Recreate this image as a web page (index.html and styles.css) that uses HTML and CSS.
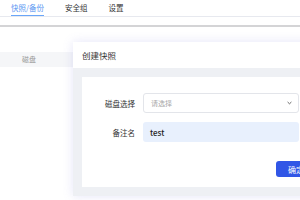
FILE: index.html
```html
<!DOCTYPE html>
<html lang="zh-CN">
<head>
    <meta charset="UTF-8">
    <title>创建快照</title>
    <link rel="stylesheet" href="styles.css">
</head>
<body>
    <div class="tabs">
        <div class="tab active">快照/备份</div>
        <div class="tab">安全组</div>
        <div class="tab">设置</div>
    </div>
    <div class="divider"></div>

    <div class="table-head">
        <span class="col">磁盘</span>
    </div>

    <div class="modal">
        <div class="modal-header">创建快照</div>
        <div class="modal-body">
            <div class="card">
                <div class="form-row">
                    <label class="form-label">磁盘选择</label>
                    <div class="select">
                        <span class="placeholder">请选择</span>
                        <svg class="chevron" width="5" height="4" viewBox="0 0 5 4">
                            <path d="M0.6 1 L2.5 2.8 L4.4 1" fill="none" stroke="#555" stroke-width="0.9"/>
                        </svg>
                    </div>
                </div>
                <div class="form-row">
                    <label class="form-label">备注名</label>
                    <div class="input">test</div>
                </div>
                <div class="actions">
                    <button class="button">确定</button>
                </div>
            </div>
        </div>
    </div>
</body>
</html>
```

FILE: styles.css
```css
html, body {
    margin: 0;
    padding: 0;
}
body {
    width: 300px;
    height: 200px;
    overflow: hidden;
    position: relative;
    background: #fff;
    font-family: "Noto Sans CJK SC", "Noto Sans", sans-serif;
    color: #333;
}
.tabs {
    display: flex;
    height: 17px;
    border-bottom: 1px solid #e7e9ef;
    box-sizing: border-box;
    padding-left: 11px;
    gap: 21px;
}
.tab {
    font-size: 7.5px;
    line-height: 15px;
    height: 16px;
    box-sizing: border-box;
    color: #333;
}
.tab.active {
    color: #5b97f2;
    border-bottom: 1.5px solid #6aa6f8;
}
.divider {
    margin-top: 8px;
    height: 2px;
    background: #d4d4d6;
}
.table-head {
    margin-top: 25px;
    height: 15px;
    background: #f5f6f8;
    font-size: 7px;
    line-height: 15px;
    color: #999;
    padding-left: 22px;
}
.modal {
    position: absolute;
    left: 73px;
    top: 42px;
    width: 270px;
    height: 154px;
    background: #fff;
    box-shadow: 0 0 10px rgba(110, 110, 220, 0.18);
    display: flex;
    flex-direction: column;
}
.modal-header {
    height: 26px;
    line-height: 27px;
    padding-left: 9px;
    font-size: 8.5px;
    color: #333;
}
.modal-body {
    flex: 1;
    background: #eef0f4;
    padding: 9px 0 9px 9px;
}
.card {
    background: #fff;
    height: 110px;
    box-sizing: border-box;
    padding-top: 16px;
}
.form-row {
    display: flex;
    align-items: center;
    gap: 8px;
    margin-bottom: 9px;
}
.form-label {
    width: 53px;
    text-align: right;
    font-size: 7.5px;
    color: #333;
}
.select, .input {
    width: 156px;
    height: 20px;
    box-sizing: border-box;
    border-radius: 3px;
    padding-left: 7px;
    font-size: 7.5px;
    display: flex;
    align-items: center;
}
.select {
    border: 1px solid #e3e5ea;
    justify-content: space-between;
    padding-right: 6px;
}
.placeholder {
    color: #a8a8a8;
    font-size: 7px;
}
.input {
    background: #e8f0fd;
    color: #222;
    font-weight: 500;
    font-size: 8px;
}
.actions {
    width: 234px;
    display: flex;
    justify-content: flex-end;
    margin-top: 19px;
}
.button {
    width: 40px;
    height: 16px;
    border: none;
    border-radius: 3px;
    background: #3156e6;
    color: #fff;
    font-family: inherit;
    font-size: 8px;
    padding: 0;
}
```
